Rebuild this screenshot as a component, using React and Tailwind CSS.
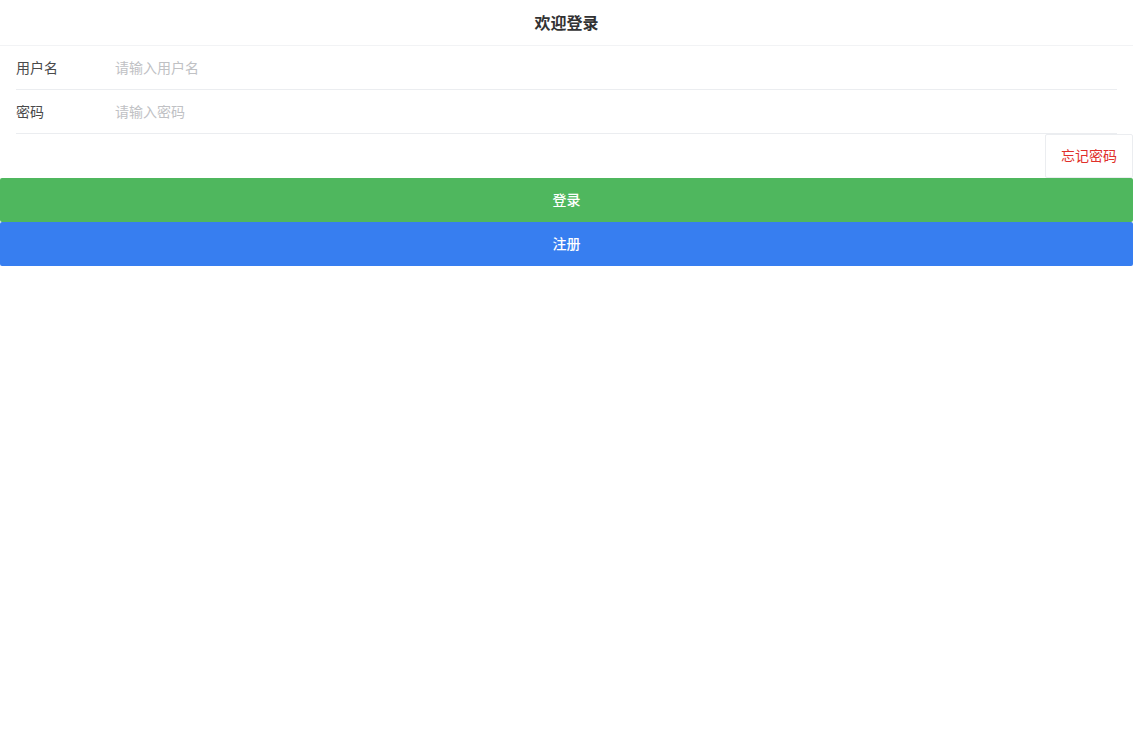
import React, { useState } from "react";

const FONT = { fontFamily: '"Noto Sans CJK SC", "Noto Sans", sans-serif' };

function Field({ label, placeholder, type = "text", value, onChange }) {
  return (
    <div className="flex items-center px-4 bg-white">
      <div className="flex items-center w-full h-11 pb-[2px] border-b border-[#ebedf0]">
        <label className="w-[87px] mr-3 shrink-0 text-sm text-[#4a4a4b]">{label}</label>
        <input
          type={type}
          value={value}
          onChange={e => onChange(e.target.value)}
          placeholder={placeholder}
          className="flex-1 text-sm text-[#323233] outline-none bg-transparent placeholder:text-[#c0c1c4]"
        />
      </div>
    </div>
  );
}

export default function App() {
  const [user, setUser] = useState("");
  const [pwd, setPwd] = useState("");

  return (
    <div className="min-h-screen bg-white" style={FONT}>
      {/* Nav bar */}
      <div className="h-[46px] pb-[2px] flex items-center justify-center bg-white border-b border-[#f2f3f5] shadow-[0_1px_2px_rgba(0,0,0,0.02)]">
        <h1 className="text-base font-semibold text-[#323233]">欢迎登录</h1>
      </div>

      <Field label="用户名" placeholder="请输入用户名" value={user} onChange={setUser} />
      <Field label="密码" placeholder="请输入密码" type="password" value={pwd} onChange={setPwd} />

      <div className="flex justify-end">
        <button className="h-11 px-[15px] pb-[2px] text-sm text-[#e02f2a] bg-white border border-[#ebedf0] rounded-[2px]">
          忘记密码
        </button>
      </div>

      <button className="w-full h-11 pb-[2px] text-sm font-medium text-white bg-[#4fb75e] rounded-[2px]">登录</button>
      <button className="w-full h-11 pb-[2px] text-sm font-medium text-white bg-[#377ef0] rounded-[2px]">注册</button>
    </div>
  );
}
